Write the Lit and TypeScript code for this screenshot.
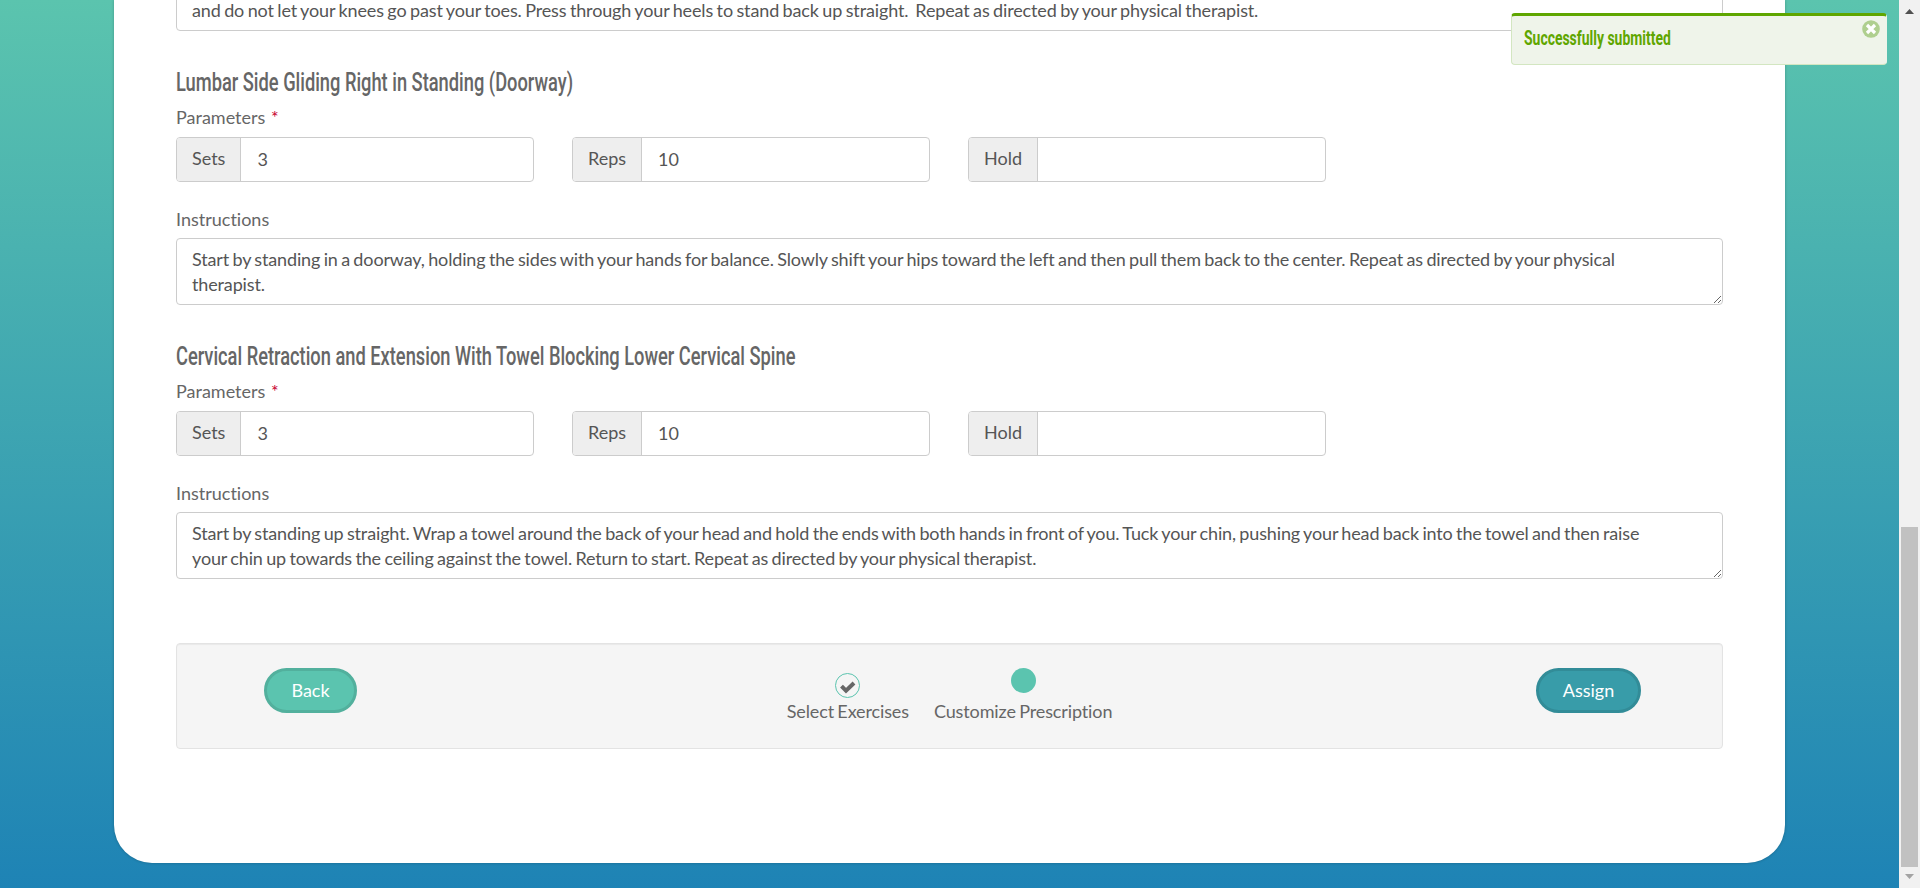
import { LitElement, html, css } from "lit";
import { customElement, property } from "lit/decorators.js";

@customElement("exercise-form")
class ExerciseForm extends LitElement {
  @property() name = "";
  @property() instructions = "";

  static styles = css`
    :host { display: block; height: 274px; color: #666; }
    .title { height: 40px; display: flex; align-items: flex-start; white-space: nowrap; }
    .title span {
      font: 500 25px/30px Roboto, sans-serif;
      transform-origin: 0 0;
      transform: scaleX(0.731);
      margin-top: 4px;
    }
    label { display: block; line-height: 26px; height: 26px; }
    .star { color: #c8002f; margin-left: 1px; }
    .row { display: flex; gap: 38px; margin: 7px 0 24px; }
    .group {
      box-sizing: border-box; width: 358px; height: 45px; display: flex;
      border: 1px solid #ccc; border-radius: 4px; overflow: hidden; background: #fff;
    }
    .addon {
      padding: 0 15px; background: #eee; border-right: 1px solid #ccc;
      line-height: 41px; color: #555;
    }
    input {
      flex: 1; min-width: 0; border: 0; padding: 0 15px 0 16px; margin: 0;
      font: inherit; color: #555; outline: none; background: none;
    }
    textarea {
      display: block; box-sizing: border-box; width: 100%; height: 67px;
      margin: 6px 0 0; padding: 8px 50px 8px 15px; border: 1px solid #ccc; border-radius: 4px;
      font: inherit; line-height: 25px; letter-spacing: -0.14px; word-spacing: -1.05px; color: #555;
      resize: both; overflow: hidden; outline: none;
    }
  `;

  render() {
    const fields = [["Sets", "3"], ["Reps", "10"], ["Hold", ""]];
    return html`
      <div class="title"><span>${this.name}</span></div>
      <label>Parameters <span class="star">*</span></label>
      <div class="row">
        ${fields.map(([k, v]) => html`<div class="group"><span class="addon">${k}</span><input .value=${v} /></div>`)}
      </div>
      <label>Instructions</label>
      <textarea .value=${this.instructions}></textarea>
    `;
  }
}

@customElement("app-root")
class AppRoot extends LitElement {
  static styles = css`
    :host {
      display: flex; position: relative; width: 1920px; height: 888px; overflow: hidden;
      font: 18px/25px Lato, sans-serif; color: #666;
      font-variant-ligatures: none;
    }
    .page {
      width: 1899px; height: 888px; box-sizing: border-box; padding: 0 114px 25px;
      background: linear-gradient(#5bc4ae, #1e83b5);
    }
    .card {
      height: 863px; box-sizing: border-box; background: #fff; padding: 0 62px;
      border-radius: 0 0 38px 38px; overflow: hidden; box-shadow: 0 0 3px rgba(0, 0, 0, 0.25);
    }
    .previous {
      display: block; box-sizing: border-box; width: 100%; height: 67px; margin: -36px 0 33px;
      padding: 33px 15px 8px; border: 1px solid #ccc; border-radius: 4px; color: #555;
      white-space: pre; letter-spacing: -0.14px; word-spacing: -0.95px;
    }
    .well {
      box-sizing: border-box; height: 106px; margin-top: 31px; padding: 24px 81px 0 87px;
      display: grid; grid-template-columns: 1fr auto 1fr; align-items: start;
      background: #f5f5f5; border: 1px solid #e3e3e3; border-radius: 4px;
      box-shadow: inset 0 1px 1px rgba(0, 0, 0, 0.05);
    }
    button {
      box-sizing: border-box; height: 45px; border-radius: 23px; padding: 0; margin: 0;
      font: inherit; color: #fff;
    }
    .back { width: 93px; background: #5bc4af; border: 3px solid #52b09d; }
    .assign { width: 105px; background: #389ca9; border: 3px solid #328c98; justify-self: end; }
    .steps { display: flex; gap: 25px; margin-right: 6px; letter-spacing: -0.12px; word-spacing: -1.1px; }
    .step { display: flex; flex-direction: column; align-items: center; height: 56px; }
    .step span { margin-top: auto; }
    .dot {
      box-sizing: border-box; width: 25px; height: 25px; border-radius: 50%; background: #5bc4af;
    }
    .done { margin-top: 5px; border: 1px solid #5bc4af; background: none; display: block; }
    .done svg { display: block; }
    .toast {
      position: absolute; left: 1511px; top: 13px; width: 376px; height: 52px; box-sizing: border-box;
      background: #eff4ea; border: 1px solid #d3e6c1; border-top: 3px solid #5fa600;
      border-right-color: #eff4ea; border-radius: 4px;
      display: flex; justify-content: space-between; padding: 9px 6px 0 12px;
    }
    .message {
      font: 700 20px/26px Roboto, sans-serif; color: #5fa600; white-space: nowrap;
      transform: scaleX(0.697); transform-origin: 0 0;
    }
    .close { width: 18px; height: 18px; margin-top: -5px; flex: none; }
    .scroll { width: 21px; height: 888px; background: #f1f1f1; display: flex; flex-direction: column; align-items: center; }
    .scroll svg { display: block; flex: none; }
    .thumb { width: 17px; height: 340px; margin-top: auto; background: #c1c1c1; }
  `;

  render() {
    return html`
      <div class="page">
        <div class="card">
          <div class="previous">and do not let your knees go past your toes. Press through your heels to stand back up straight.  Repeat as directed by your physical therapist.</div>
          <exercise-form
            name="Lumbar Side Gliding Right in Standing (Doorway)"
            instructions="Start by standing in a doorway, holding the sides with your hands for balance. Slowly shift your hips toward the left and then pull them back to the center. Repeat as directed by your physical therapist."
          ></exercise-form>
          <exercise-form
            name="Cervical Retraction and Extension With Towel Blocking Lower Cervical Spine"
            instructions="Start by standing up straight. Wrap a towel around the back of your head and hold the ends with both hands in front of you. Tuck your chin, pushing your head back into the towel and then raise your chin up towards the ceiling against the towel. Return to start. Repeat as directed by your physical therapist."
          ></exercise-form>
          <div class="well">
            <button class="back">Back</button>
            <div class="steps">
              <div class="step">
                <div class="dot done">
                  <svg width="23" height="23" viewBox="0 0 23 23"><path d="M5.5 12.2 10 16.7 18 9" fill="none" stroke="#666" stroke-width="4"/></svg>
                </div>
                <span>Select Exercises</span>
              </div>
              <div class="step"><div class="dot"></div><span>Customize Prescription</span></div>
            </div>
            <button class="assign">Assign</button>
          </div>
        </div>
      </div>
      <div class="scroll">
        <svg width="21" height="20" viewBox="0 0 21 20"><path d="M6 14 10.5 9 15 14Z" fill="#505050"/></svg>
        <div class="thumb"></div>
        <svg width="21" height="21" viewBox="0 0 21 21"><path d="M6 7 10.5 12 15 7Z" fill="#a3a3a3"/></svg>
      </div>
      <div class="toast">
        <span class="message">Successfully submitted</span>
        <svg class="close" viewBox="0 0 18 18"><circle cx="9" cy="9" r="8.8" fill="#afcf8f"/><path d="M5 5 13 13M13 5 5 13" stroke="#fff" stroke-width="3.2"/></svg>
      </div>
    `;
  }
}
